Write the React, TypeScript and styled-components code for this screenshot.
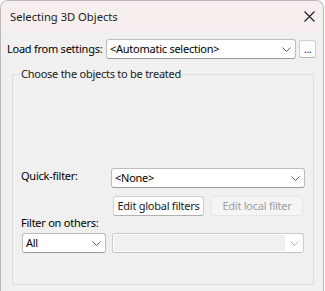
import React from "react";
import styled, { createGlobalStyle } from "styled-components";

const GlobalStyle = createGlobalStyle`
  html, body {
    margin: 0;
    padding: 0;
    background: #ffffff;
  }
  body {
    font-family: "Noto Sans", "Open Sans", sans-serif;
    font-size: 11px;
    letter-spacing: -0.25px;
    color: #000;
  }
`;

const SWindow = styled.div`
  width: 324px;
  height: 291px;
  box-sizing: border-box;
  border: 1px solid #b9b9b9;
  border-bottom: none;
  border-radius: 8px 8px 0 0;
  background: #f0f0f0;
  display: flex;
  flex-direction: column;
  overflow: hidden;
`;

const STitleBar = styled.div`
  height: 30px;
  flex: none;
  display: flex;
  align-items: center;
  justify-content: space-between;
  padding: 0 0 0 9px;
  background: #f6efee;
`;

const STitle = styled.span`
  font-size: 11.2px;
  letter-spacing: 0;
  color: #1b1b1b;
`;

const SClose = styled.button`
  width: 28px;
  height: 30px;
  border: none;
  background: transparent;
  display: flex;
  align-items: center;
  justify-content: center;
  padding: 0;
`;

const SBody = styled.div`
  flex: 1;
  display: flex;
  flex-direction: column;
  padding: 8px 0 0 6px;
`;

const SRow = styled.div<{ $indent?: number; $top?: number; $gap?: number }>`
  display: flex;
  align-items: flex-start;
  gap: ${(p) => p.$gap ?? 0}px;
  margin-left: ${(p) => p.$indent ?? 0}px;
  margin-top: ${(p) => p.$top ?? 0}px;
`;

const SLabel = styled.span<{ $width: number; $top?: number; $lh?: number }>`
  width: ${(p) => p.$width}px;
  flex: none;
  line-height: ${(p) => p.$lh ?? 16}px;
  margin-top: ${(p) => p.$top ?? 0}px;
  white-space: nowrap;
`;

const SCombo = styled.div<{ $width: number; $disabled?: boolean }>`
  width: ${(p) => p.$width}px;
  height: 20px;
  box-sizing: border-box;
  flex: none;
  display: flex;
  align-items: center;
  border: 1px solid ${(p) => (p.$disabled ? "#cccccc" : "#bdbdbd")};
  border-bottom-color: ${(p) => (p.$disabled ? "#c4c4c4" : "#9a9a9a")};
  border-radius: 3px;
  background: #ffffff;
  padding: 0 0 0 1px;
`;

const SComboText = styled.div<{ $disabled?: boolean }>`
  flex: 1;
  height: 16px;
  line-height: 16px;
  padding-left: 2px;
  background: ${(p) => (p.$disabled ? "#f0f0f0" : "transparent")};
  white-space: nowrap;
  overflow: hidden;
`;

const SChevronBox = styled.div`
  width: 18px;
  display: flex;
  justify-content: center;
  align-items: center;
`;

const SButton = styled.button<{ $width: number; $disabled?: boolean }>`
  width: ${(p) => p.$width}px;
  height: 20px;
  flex: none;
  box-sizing: border-box;
  padding: 0;
  font-family: inherit;
  font-size: inherit;
  letter-spacing: inherit;
  line-height: 16px;
  white-space: nowrap;
  color: ${(p) => (p.$disabled ? "#9d9d9d" : "#1a1a1a")};
  background: ${(p) => (p.$disabled ? "#f5f5f5" : "#fdfdfd")};
  border: 1px solid ${(p) => (p.$disabled ? "#e6e6e6" : "#d0d0d0")};
  border-bottom-color: ${(p) => (p.$disabled ? "#e6e6e6" : "#b0b0b0")};
  border-radius: 3px;
`;

const SMoreButton = styled(SButton)`
  height: 18px;
  margin-top: 1px;
  line-height: 10px;
  letter-spacing: -0.5px;
  color: #1f2a7a;
`;

const SGroup = styled.fieldset`
  margin: 7px 0 0 5px;
  width: 302px;
  box-sizing: border-box;
  border: 1px solid #dcdcdc;
  padding: 0 0 0 8px;
`;

const SLegend = styled.legend`
  padding: 0 1px;
  margin-left: -1px;
  line-height: 16px;
  color: #1a1a1a;
`;

const SGroupContent = styled.div`
  height: 202px;
  box-sizing: border-box;
  display: flex;
  flex-direction: column;
  justify-content: flex-end;
  padding-bottom: 31px;
`;

const Chevron = ({ disabled }: { disabled?: boolean }) => (
  <svg width="9" height="5" viewBox="0 0 9 5">
    <path
      d="M0.5 0.5 L4.5 4.5 L8.5 0.5"
      fill="none"
      stroke={disabled ? "#b4b4b4" : "#606060"}
      strokeWidth="1"
    />
  </svg>
);

const Combo = ({
  width,
  value,
  disabled,
}: {
  width: number;
  value: string;
  disabled?: boolean;
}) => (
  <SCombo $width={width} $disabled={disabled}>
    <SComboText $disabled={disabled}>{value}</SComboText>
    <SChevronBox>
      <Chevron disabled={disabled} />
    </SChevronBox>
  </SCombo>
);

const App = () => {
  return (
    <>
      <GlobalStyle />
      <SWindow>
        <STitleBar>
          <STitle>Selecting 3D Objects</STitle>
          <SClose aria-label="Close">
            <svg width="11" height="11" viewBox="0 0 11 11">
              <path
                d="M0.5 0.5 L10.5 10.5 M10.5 0.5 L0.5 10.5"
                stroke="#1b1b1b"
                strokeWidth="1.1"
              />
            </svg>
          </SClose>
        </STitleBar>
        <SBody>
          <SRow $gap={3}>
            <SLabel $width={96} $top={2}>
              Load from settings:
            </SLabel>
            <Combo width={190} value="<Automatic selection>" />
            <SMoreButton $width={17}>...</SMoreButton>
          </SRow>
          <SGroup>
            <SLegend>Choose the objects to be treated</SLegend>
            <SGroupContent>
              <SRow>
                <SLabel $width={90}>Quick-filter:</SLabel>
                <Combo width={194} value="<None>" />
              </SRow>
              <SRow $indent={92} $top={8} $gap={7}>
                <SButton $width={91}>Edit global filters</SButton>
                <SButton $width={92} $disabled>
                  Edit local filter
                </SButton>
              </SRow>
              <SLabel $width={120} $lh={14}>
                Filter on others:
              </SLabel>
              <SRow $indent={1} $top={3} $gap={6}>
                <Combo width={84} value="All" />
                <Combo width={192} value="" disabled />
              </SRow>
            </SGroupContent>
          </SGroup>
        </SBody>
      </SWindow>
    </>
  );
};

export default App;
